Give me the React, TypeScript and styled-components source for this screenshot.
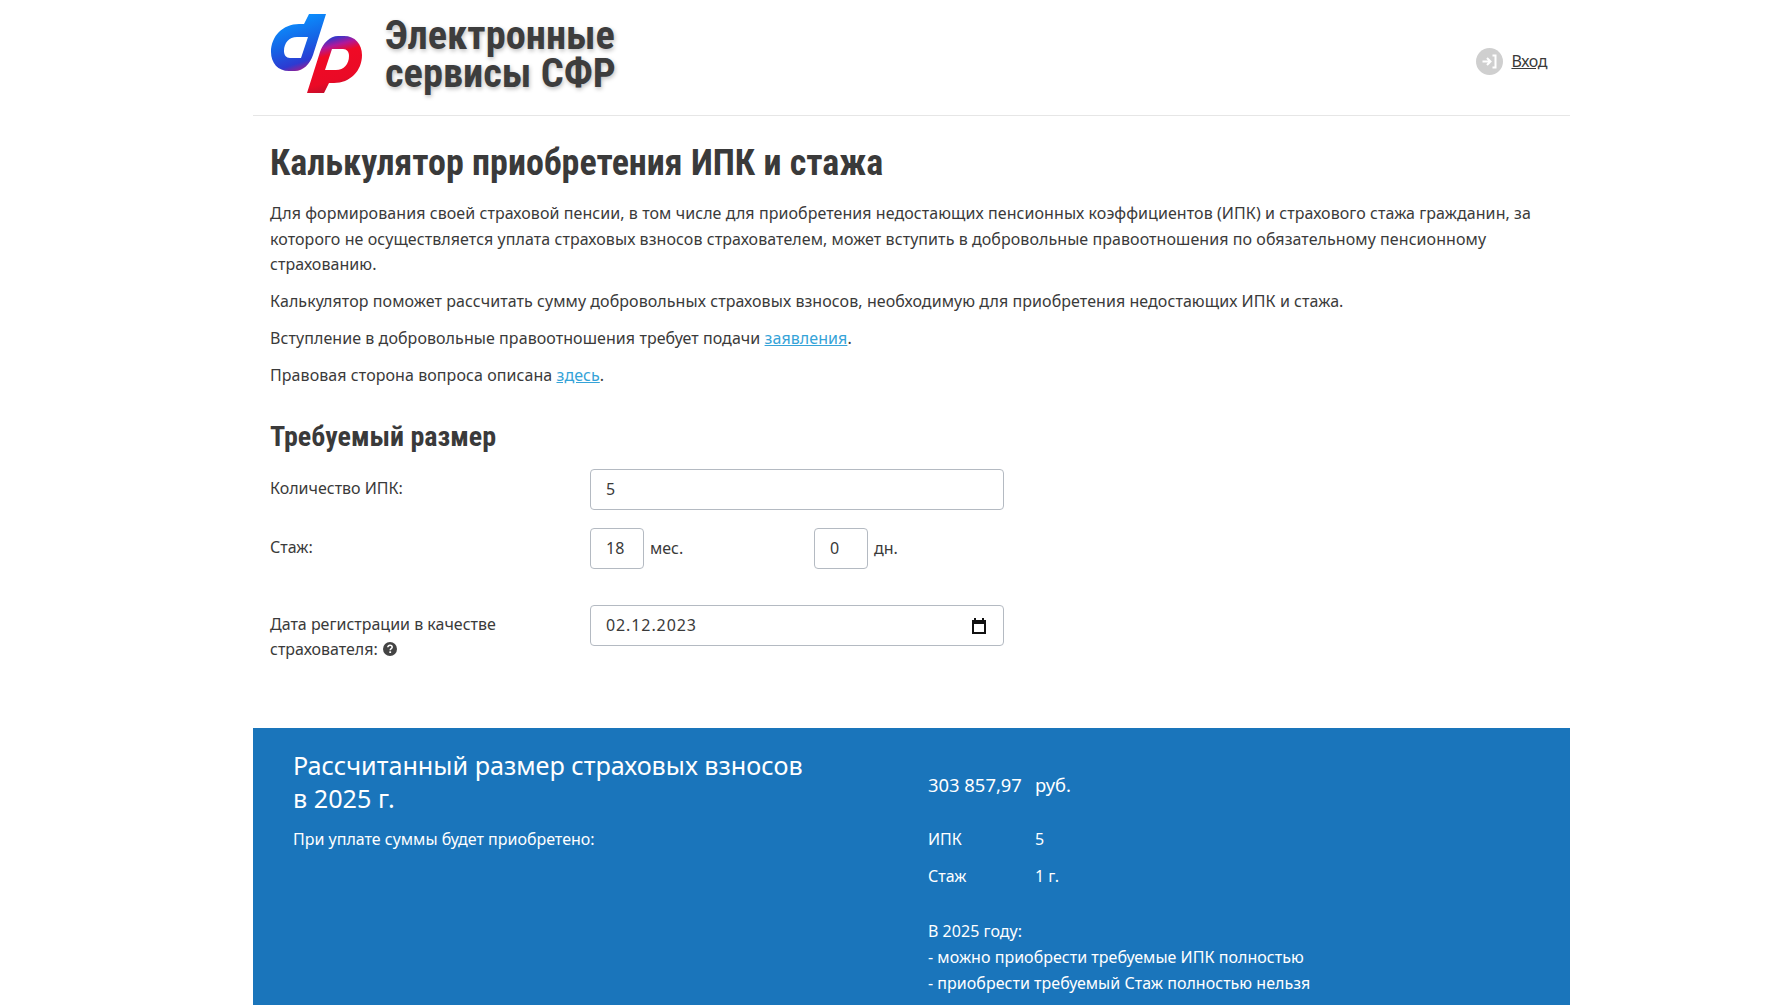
import React from 'react'
import styled, { createGlobalStyle } from 'styled-components'

const GlobalStyle = createGlobalStyle`
  html, body {
    margin: 0;
    padding: 0;
    background: #fff;
    overflow: hidden;
  }
  body {
    font-family: "Noto Sans", "Open Sans", sans-serif;
    font-size: 16px;
    line-height: 25.6px;
    color: #3a3a3a;
  }
`

const Page = styled.div`
  width: 1317px;
  margin-left: 253px;
  height: 1005px;
  display: flex;
  flex-direction: column;
`

const Header = styled.header`
  height: 116px;
  flex: none;
  display: flex;
  align-items: flex-start;
  padding: 14px 23px 0 18px;
  border-bottom: 1px solid #e6e6e6;
  box-sizing: border-box;
`

const Brand = styled.div`
  display: flex;
  align-items: center;
  gap: 23px;
  flex: 1;
`

const BrandName = styled.div`
  font-family: Roboto, sans-serif;
  font-stretch: 75%;
  font-weight: 700;
  font-size: 40.4px;
  line-height: 38px;
  padding-top: 2px;
  color: #3d3d3d;
  text-shadow: 1px 2px 4px rgba(0, 0, 0, 0.25);
`

const Login = styled.a`
  display: flex;
  align-items: center;
  gap: 8px;
  margin-top: 34px;
  color: #3a3a3a;
  font-size: 16px;
  letter-spacing: -0.4px;
  text-decoration: underline;
`

const Main = styled.main`
  padding: 0 17px;
  flex: none;
`

const Title = styled.h1`
  font-family: Roboto, sans-serif;
  font-stretch: 75%;
  font-weight: 700;
  font-size: 36px;
  line-height: 44px;
  color: #3a3a3a;
  margin: 25px 0 16px;
`

const Text = styled.p`
  margin: 0 0 11.4px;
  letter-spacing: 0.07px;
`

const Link = styled.a`
  color: #35a3d8;
  text-decoration: underline;
`

const Subtitle = styled.h2`
  font-family: Roboto, sans-serif;
  font-stretch: 75%;
  font-weight: 700;
  font-size: 28px;
  line-height: 34px;
  color: #3a3a3a;
  margin: 31px 0 15px;
`

const Row = styled.div<{ $gap: number }>`
  display: grid;
  grid-template-columns: 320px 414px;
  margin-bottom: ${p => p.$gap}px;
`

const Label = styled.div<{ $top: number }>`
  padding-top: ${p => p.$top}px;
`

const Field = styled.div`
  position: relative;
  display: flex;
  align-items: flex-start;
`

const Input = styled.input<{ $small?: boolean; $spaced?: boolean }>`
  box-sizing: border-box;
  flex: none;
  width: ${p => (p.$small ? '54px' : '100%')};
  height: 41px;
  padding: 0 15px;
  border: 1px solid #b4bac2;
  border-radius: 4px;
  background: #fff;
  color: #3a3a3a;
  font: inherit;
  letter-spacing: ${p => (p.$spaced ? '0.9px' : '0')};
  outline: none;
`

const Unit = styled.span`
  margin-left: 6px;
  line-height: 41px;
`

const Pair = styled.div`
  flex: none;
  display: flex;
  align-items: flex-start;
  width: 224px;
`

const CalendarIcon = styled.svg`
  position: absolute;
  right: 17px;
  top: 12px;
`

const Help = styled.svg`
  vertical-align: -1px;
  margin-left: 5px;
`

const Result = styled.section`
  flex: 1;
  background: #1a75bb;
  color: #fff;
  padding: 21px 40px 0;
  display: grid;
  grid-template-columns: 635px 1fr;
`

const ResultTitle = styled.div`
  font-size: 25.2px;
  line-height: 33px;
  margin-bottom: 12px;
`

const ValueRow = styled.div<{ $mb: number }>`
  display: grid;
  grid-template-columns: 107px 1fr;
  margin-bottom: ${p => p.$mb}px;
`

const Amount = styled.div`
  font-size: 18.4px;
  padding-top: 23px;
  margin-bottom: 29px;
  display: grid;
  grid-template-columns: 107px 1fr;
`

const Note = styled.div`
  line-height: 26px;
  letter-spacing: 0.03px;
`

const SfrLogo = () => (
  <svg width="91" height="79" viewBox="0 0 91 79">
    <defs>
      <linearGradient id="sfrLeft" gradientUnits="userSpaceOnUse" x1="18" y1="4" x2="36" y2="58">
        <stop offset="0" stopColor="#0a92ff" />
        <stop offset="0.45" stopColor="#1565e6" />
        <stop offset="0.8" stopColor="#2c3bd2" />
        <stop offset="1" stopColor="#c2127a" />
      </linearGradient>
      <linearGradient id="sfrRight" gradientUnits="userSpaceOnUse" x1="48" y1="18" x2="65" y2="79">
        <stop offset="0" stopColor="#1e42d4" />
        <stop offset="0.15" stopColor="#3a35c8" />
        <stop offset="0.27" stopColor="#b0189a" />
        <stop offset="0.4" stopColor="#f00a25" />
        <stop offset="0.8" stopColor="#ea0a26" />
        <stop offset="1" stopColor="#b80f2c" />
      </linearGradient>
    </defs>
    <path
      fill="url(#sfrLeft)"
      fillRule="evenodd"
      d="M38 0H55L42 41C39 50 32 57 24 57H18C7 57 0 49 0 38C0 22 12 10 28 10H33ZM22 23H37L30 44H19C15 44 13 41 13 37C13 29 18 23 26 23Z"
    />
    <path
      fill="url(#sfrRight)"
      fillRule="evenodd"
      d="M53 79H36L49 38C52 29 59 22 67 22H73C84 22 91 30 91 41C91 57 79 69 63 69H58ZM69 56H54L61 35H72C76 35 78 38 78 42C78 50 73 56 65 56Z"
    />
  </svg>
)

const LoginIcon = () => (
  <svg width="27" height="27" viewBox="0 0 27 27">
    <circle cx="13.5" cy="13.5" r="13.5" fill="#cfcfcf" />
    <path d="M6.500 13.500H14.500M11 10L14.500 13.500L11 17" fill="none" stroke="#fff" strokeWidth="2" />
    <path d="M16.500 7.500H19.500V19.500H16.500" fill="none" stroke="#fff" strokeWidth="2" />
  </svg>
)

export default function App() {
  return (
    <>
      <GlobalStyle />
      <Page>
        <Header>
          <Brand>
            <SfrLogo />
            <BrandName>
              Электронные
              <br />
              сервисы СФР
            </BrandName>
          </Brand>
          <Login href="#">
            <LoginIcon />
            Вход
          </Login>
        </Header>
        <Main>
          <Title>Калькулятор приобретения ИПК и стажа</Title>
          <Text>
            Для формирования своей страховой пенсии, в том числе для приобретения недостающих пенсионных коэффициентов (ИПК) и страхового стажа гражданин, за которого не осуществляется уплата страховых взносов страхователем, может вступить в добровольные правоотношения по обязательному пенсионному страхованию.
          </Text>
          <Text>Калькулятор поможет рассчитать сумму добровольных страховых взносов, необходимую для приобретения недостающих ИПК и стажа.</Text>
          <Text>
            Вступление в добровольные правоотношения требует подачи <Link href="#">заявления</Link>.
          </Text>
          <Text>
            Правовая сторона вопроса описана <Link href="#">здесь</Link>.
          </Text>
          <Subtitle>Требуемый размер</Subtitle>
          <Row $gap={18}>
            <Label $top={7}>Количество ИПК:</Label>
            <Field>
              <Input defaultValue="5" />
            </Field>
          </Row>
          <Row $gap={36}>
            <Label $top={7}>Стаж:</Label>
            <Field>
              <Pair>
                <Input $small defaultValue="18" />
                <Unit>мес.</Unit>
              </Pair>
              <Pair>
                <Input $small defaultValue="0" />
                <Unit>дн.</Unit>
              </Pair>
            </Field>
          </Row>
          <Row $gap={65}>
            <Label $top={7}>
              Дата регистрации в качестве
              <br />
              страхователя:
              <Help width="14" height="14" viewBox="0 0 14 14">
                <circle cx="7" cy="7" r="7" fill="#444" />
                <path d="M4.800 5.300C4.800 4 5.800 3.300 7 3.300C8.300 3.300 9.200 4 9.200 5.200C9.200 6.600 7.200 6.700 7.200 8.200" fill="none" stroke="#fff" strokeWidth="1.500" />
                <rect x="6.300" y="9.300" width="1.800" height="1.700" fill="#fff" />
              </Help>
            </Label>
            <Field>
              <Input $spaced defaultValue="02.12.2023" />
              <CalendarIcon width="16" height="18" viewBox="0 0 16 18">
                <path d="M3 1H5V3H11V1H13V3H15V17H1V3H3ZM3 7V15H13V7Z" fill="#111" fillRule="evenodd" />
              </CalendarIcon>
            </Field>
          </Row>
        </Main>
        <Result>
          <div>
            <ResultTitle>
              Рассчитанный размер страховых взносов
              <br />в 2025 г.
            </ResultTitle>
            <div>При уплате суммы будет приобретено:</div>
          </div>
          <div>
            <Amount>
              <span>303 857,97</span>
              <span>руб.</span>
            </Amount>
            <ValueRow $mb={12}>
              <span>ИПК</span>
              <span>5</span>
            </ValueRow>
            <ValueRow $mb={28}>
              <span>Стаж</span>
              <span>1 г.</span>
            </ValueRow>
            <Note>
              В 2025 году:
              <br />- можно приобрести требуемые ИПК полностью
              <br />- приобрести требуемый Стаж полностью нельзя
            </Note>
          </div>
        </Result>
      </Page>
    </>
  )
}
